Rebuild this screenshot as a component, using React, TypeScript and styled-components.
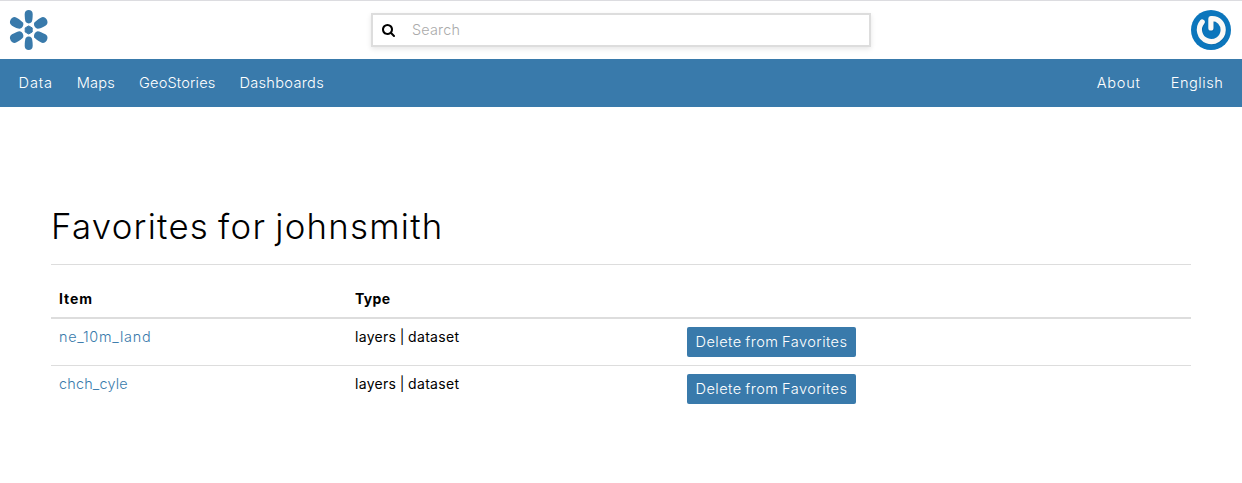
import React from 'react';
import styled, { createGlobalStyle } from 'styled-components';

const brand = '#397aab';

const GlobalStyle = createGlobalStyle`
  * { box-sizing: border-box; }
  body { margin: 0; background: #fff; color: #000; font: 400 14px/20px Inter, "Open Sans", sans-serif; }
`;

const Page = styled.div`min-height: 483px; border-top: 1px solid #dcdce0;`;

const TopBar = styled.header`
  height: 58px;
  display: flex;
  align-items: center;
  justify-content: space-between;
  padding: 0 11px 0 9px;
`;

const SearchBox = styled.label`
  display: flex;
  align-items: center;
  width: 500px;
  height: 34px;
  margin-left: 2px;
  padding-left: 9px;
  border: 2px solid #ddd;
  box-shadow: 0 2px 5px rgba(0, 0, 0, 0.1);
`;

const SearchText = styled.span`
  margin-left: 17.5px;
  color: #aaa;
  font-size: 14.4px;
  font-weight: 300;
  letter-spacing: 0.2px;
`;

const NavBar = styled.nav`
  height: 48px;
  display: flex;
  align-items: center;
  justify-content: space-between;
  padding: 0 18.5px 0 18.6px;
  background: ${brand};
`;

const NavGroup = styled.div<{ $gap: number }>`
  display: flex;
  gap: ${p => p.$gap}px;
`;

const NavLink = styled.a<{ $track: number }>`
  color: #fff;
  font-size: 14.6px;
  font-weight: 300;
  letter-spacing: ${p => p.$track}px;
`;

const Main = styled.main`width: 1140px; margin: 98px auto 0;`;

const Title = styled.h1`
  margin: 0 0 16px;
  height: 60px;
  line-height: 43px;
  border-bottom: 1px solid #ddd;
  font-size: 34.8px;
  font-weight: 300;
  letter-spacing: 1.26px;
  word-spacing: -2px;
`;

const Table = styled.table`
  width: 100%;
  table-layout: fixed;
  border-collapse: separate;
  border-spacing: 0;
`;

const ItemColumn = styled.col`width: 296px;`;
const TypeColumn = styled.col`width: 332px;`;

const Head = styled.th<{ $track?: number }>`
  height: 38px;
  padding: 8px;
  text-align: left;
  border-bottom: 2px solid #ddd;
  font-weight: 700;
  letter-spacing: ${p => p.$track ?? 0}px;
`;

const Row = styled.tr`
  & + & > td { border-top: 1px solid #ddd; }
`;

const Cell = styled.td`
  padding: 8px;
  vertical-align: top;
  letter-spacing: 0.3px;
  word-spacing: -0.8px;
`;

const ItemLink = styled.a<{ $track: number }>`
  color: ${brand};
  font-size: 14.4px;
  font-weight: 300;
  letter-spacing: ${p => p.$track}px;
`;

const Button = styled.button`
  display: block;
  width: 169px;
  height: 30px;
  padding: 0;
  border: 0;
  border-radius: 2px;
  background: ${brand};
  color: #fff;
  font: 300 14.6px/20px Inter, "Open Sans", sans-serif;
  letter-spacing: 0.42px;
  word-spacing: -0.8px;
`;

const navLinks = [
  { label: 'Data', track: 0.8 },
  { label: 'Maps', track: 0.2 },
  { label: 'GeoStories', track: 0.15 },
  { label: 'Dashboards', track: 0.3 },
];

const favorites = [
  { name: 'ne_10m_land', type: 'layers | dataset', track: 0.75 },
  { name: 'chch_cyle', type: 'layers | dataset', track: 0.2 },
];

function Logo() {
  return (
    <svg width="39" height="42" viewBox="0 0 39 42" fill={brand}>
      <path d="M19.7 16.900L23.200 18.900V23L19.700 25L16.200 23V18.900Z" stroke={brand} strokeLinejoin="round" />
      {[0, 60, 120, 180, 240, 300].map(angle => (
        <path
          key={angle}
          transform={`translate(19.7 21) rotate(${angle})${angle % 180 ? ' scale(1.15 1.04)' : ''}`}
          d="M-4-16C-4-18.600-2.300-20 0-20S4-18.600 4-16C4-12.500 3.700-9.800 3-8Q1.700-6.600 0-6.600T-3-8C-3.700-9.800-4-12.500-4-16Z"
        />
      ))}
    </svg>
  );
}

function SearchIcon() {
  return (
    <svg width="13" height="13" viewBox="0 128 1664 1664">
      <path d="M1152 832q0-185-131.500-316.500T704 384 387.500 515.500 256 832t131.500 316.500T704 1280t316.500-131.500T1152 832zm512 832q0 52-38 90t-90 38q-54 0-90-38l-343-342q-179 124-399 124-143 0-273.500-55.500t-225-150-150-225T0 832t55.500-273.500 150-225 225-150T704 128t273.500 55.500 225 150 150 225T1408 832q0 220-124 399l343 343q37 37 37 90z" />
    </svg>
  );
}

function Avatar() {
  return (
    <svg width="40" height="40" viewBox="0 0 40 40">
      <circle cx="20" cy="20" r="20" fill="#0c76bc" />
      <g fill="none" strokeWidth="5.2" strokeLinecap="round" strokeLinejoin="round">
        <path d="M19.900 18V8.700C28 8 32.200 14 32.200 20A11.900 11.900 0 1 1 11.200 12" stroke="#075b94" opacity=".45" transform="translate(.7 .8)" />
        <path d="M19.900 18V8.700C28 8 32.200 14 32.200 20A11.900 11.900 0 1 1 11.200 12" stroke="#fbf9f6" />
      </g>
    </svg>
  );
}

export default function App() {
  return (
    <Page>
      <GlobalStyle />
      <TopBar>
        <Logo />
        <SearchBox>
          <SearchIcon />
          <SearchText>Search</SearchText>
        </SearchBox>
        <Avatar />
      </TopBar>
      <NavBar>
        <NavGroup $gap={24}>
          {navLinks.map(link => (
            <NavLink key={link.label} $track={link.track}>{link.label}</NavLink>
          ))}
        </NavGroup>
        <NavGroup $gap={30}>
          <NavLink $track={0.75}>About</NavLink>
          <NavLink $track={0.55}>English</NavLink>
        </NavGroup>
      </NavBar>
      <Main>
        <Title>Favorites for johnsmith</Title>
        <Table>
          <colgroup><ItemColumn /><TypeColumn /><col /></colgroup>
          <thead>
            <tr><Head $track={0.9}>Item</Head><Head $track={0.35}>Type</Head><Head /></tr>
          </thead>
          <tbody>
            {favorites.map(item => (
              <Row key={item.name}>
                <Cell><ItemLink $track={item.track}>{item.name}</ItemLink></Cell>
                <Cell>{item.type}</Cell>
                <Cell><Button>Delete from Favorites</Button></Cell>
              </Row>
            ))}
          </tbody>
        </Table>
      </Main>
    </Page>
  );
}
